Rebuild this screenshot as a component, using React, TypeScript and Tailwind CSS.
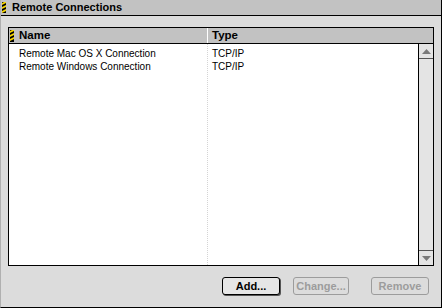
import React from "react"

interface Connection {
  name: string
  type: string
}

const connections: Connection[] = [
  { name: "Remote Mac OS X Connection", type: "TCP/IP" },
  { name: "Remote Windows Connection", type: "TCP/IP" },
]

// little yellow/black "grip" used on the title bar and the list header
function Grip({ h }: { h: number }) {
  return (
    <svg width="4" height={h} viewBox={`0 0 4 ${h}`} className="block shrink-0">
      <rect width="4" height={h} fill="#000" />
      {Array.from({ length: Math.ceil(h / 4) }).map((_, i) => (
        <polygon key={i} points={`0,${i * 4 + 1} 4,${i * 4 - 1} 4,${i * 4 + 1} 0,${i * 4 + 3}`} fill="#f5d400" />
      ))}
    </svg>
  )
}

function Arrow({ dir }: { dir: "up" | "down" }) {
  return (
    <svg width="9" height="5" viewBox="0 0 9 5" className="block">
      {dir === "up" ? <polygon points="4.5,0 9,5 0,5" fill="#7a7a7a" /> : <polygon points="0,0 9,0 4.5,5" fill="#7a7a7a" />}
    </svg>
  )
}

export default function App() {
  const font = { fontFamily: '"Liberation Sans", Arial, sans-serif' }

  return (
    <div
      className="w-[442px] h-[308px] flex flex-col bg-[#dcdcdc] border-l border-l-[#b0b0b0] border-r border-r-black border-b border-b-black text-black"
      style={font}
    >
      {/* Title bar */}
      <div className="h-[16px] shrink-0 flex items-center bg-[#c2c2c2] border-b border-black pl-[1px]">
        <Grip h={11} />
        <span className="ml-[6px] text-[11px] font-bold leading-none">Remote Connections</span>
      </div>

      {/* List box */}
      <div className="ml-[7px] mt-[11px] w-[426px] h-[239px] border border-black flex flex-col bg-white">
        {/* Column header */}
        <div className="h-[16px] shrink-0 flex items-center bg-[#c2c2c2] border-b border-black">
          <div className="w-[198px] flex items-center pl-[1px] h-full">
            <Grip h={12} />
            <span className="ml-[5px] text-[11.5px] font-bold leading-none">Name</span>
          </div>
          <div className="w-px h-full bg-white" />
          <span className="ml-[4px] text-[11.5px] font-bold leading-none">Type</span>
        </div>

        <div className="flex-1 flex min-h-0">
          {/* Rows */}
          <div className="flex-1 relative pt-[3px]">
            <div className="absolute left-[198px] top-0 bottom-0 border-l border-dotted border-[#d4d4d4]" />
            {connections.map((c) => (
              <div key={c.name} className="h-[13px] flex items-center text-[10px] leading-none">
                <span className="w-[199px] pl-[10px]">{c.name}</span>
                <span className="pl-[4px]">{c.type}</span>
              </div>
            ))}
          </div>

          {/* Scrollbar */}
          <div className="w-[15px] shrink-0 border-l border-black bg-[#e4e4e4] flex flex-col justify-between">
            <div className="h-[15px] border-b border-[#555] flex items-center justify-center">
              <Arrow dir="up" />
            </div>
            <div className="h-[15px] border-t border-[#555] flex items-center justify-center">
              <Arrow dir="down" />
            </div>
          </div>
        </div>
      </div>

      {/* Buttons */}
      <div className="mt-[11px] flex justify-end pr-[12px] text-[11px] font-bold">
        <button className="w-[58px] h-[18px] rounded-[3px] border border-black bg-[#e6e6e6] shadow-[1px_1px_0_#555] leading-none">
          Add...
        </button>
        <button
          disabled
          className="ml-[13px] w-[56px] h-[18px] rounded-[3px] border border-[#9c9c9c] text-[#9c9c9c] bg-[#dcdcdc] leading-none"
        >
          Change...
        </button>
        <button
          disabled
          className="ml-[22px] w-[58px] h-[18px] rounded-[3px] border border-[#9c9c9c] text-[#9c9c9c] bg-[#dcdcdc] leading-none"
        >
          Remove
        </button>
      </div>
    </div>
  )
}
